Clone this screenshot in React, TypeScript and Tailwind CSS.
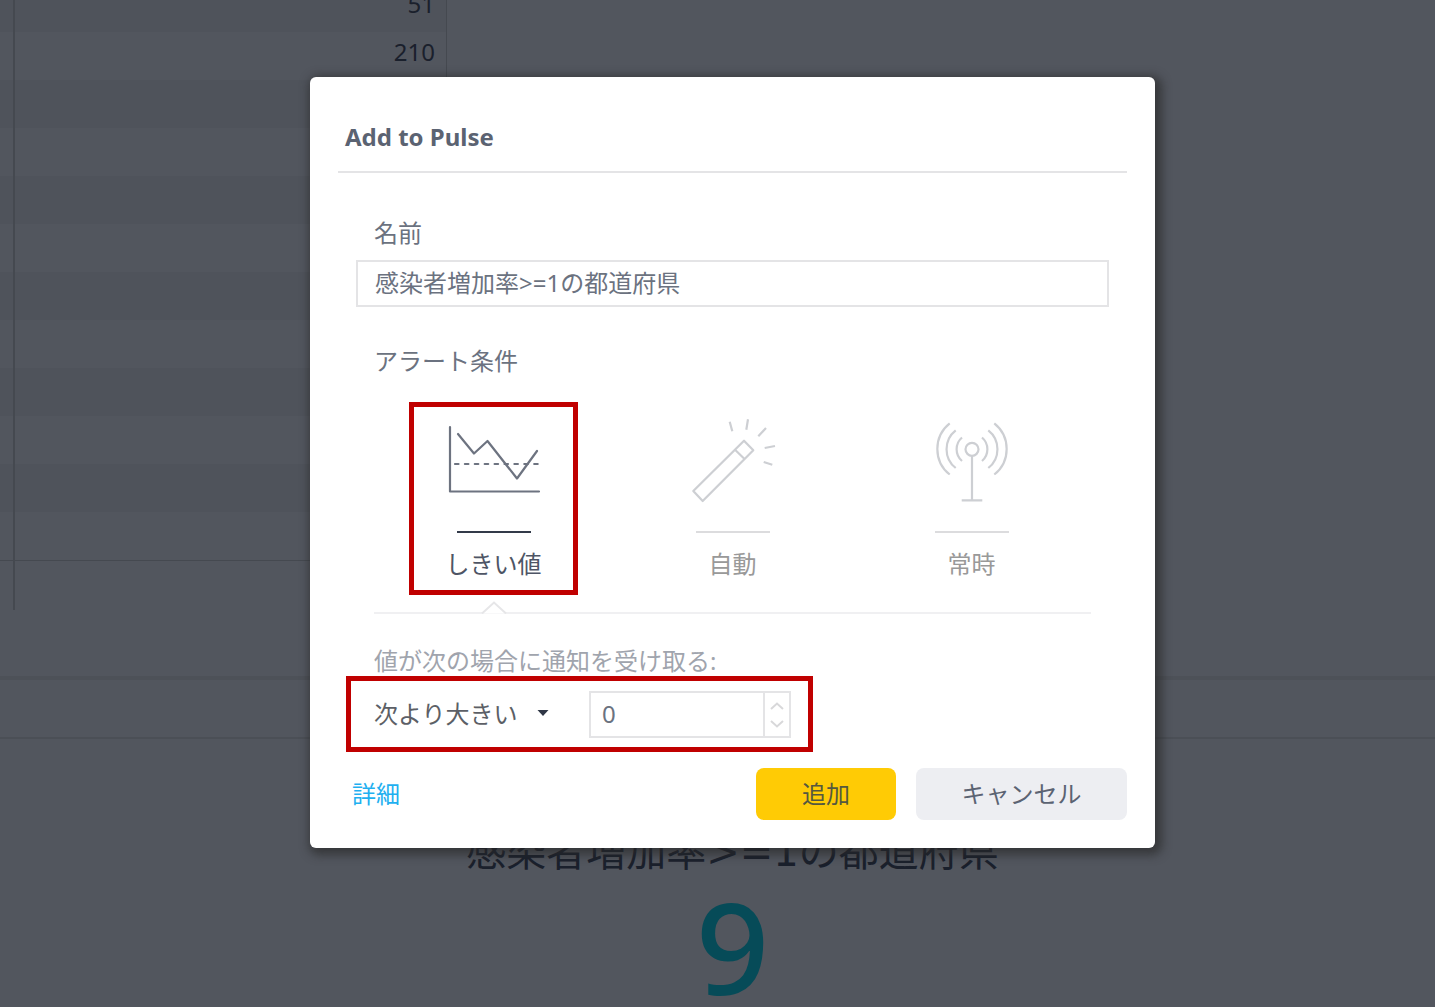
import { useState } from "react";
import clsx from "clsx";

const rows = ["51", "210", "", "", "", "", "", "", "", "", "", ""];

const ThresholdIcon = () => (
  <svg width="96" height="84" viewBox="0 0 96 84" fill="none" stroke="currentColor" strokeWidth="2.2" strokeLinecap="round" strokeLinejoin="round">
    <path d="M4 9V73.5H93" />
    <path d="M12 16L28 35.5L41.5 23L71 60.5L91 33" />
    <path d="M9 46H94.5" strokeDasharray="3.5 6.4" />
  </svg>
);

const WandIcon = () => (
  <svg width="96" height="84" viewBox="0 0 96 84" fill="none" stroke="currentColor" strokeWidth="2.2" strokeLinejoin="round" className="overflow-visible">
    <path d="M8.3 73L17.7 83L68.3 32.3L59 22.7Z" />
    <path d="M50 31.7L59.3 40.7" />
    <path d="M44.7 3.7L47.3 13.3M63 1.3L61.3 11.7M81 10L73.3 18.3M90 28L79.7 30M78.7 44L87.3 46.7" />
  </svg>
);

const AntennaIcon = () => (
  <svg width="96" height="84" viewBox="0 0 96 84" fill="none" stroke="currentColor" strokeWidth="2.2">
    <circle cx="48" cy="31.3" r="6.5" />
    <path d="M48 38V82.3M37.7 82.3H58.3" />
    <path d="M38 19.5A15.5 15.5 0 0 0 38 43M31.7 12.3A24 24 0 0 0 31.7 50M25.7 5.3A32.7 32.7 0 0 0 25.7 56.5" />
    <path d="M58 19.5A15.5 15.5 0 0 1 58 43M64.3 12.3A24 24 0 0 1 64.3 50M70.3 5.3A32.7 32.7 0 0 1 70.3 56.5" />
  </svg>
);

const conditions = [
  { id: "threshold", label: "しきい値", Icon: ThresholdIcon },
  { id: "auto", label: "自動", Icon: WandIcon },
  { id: "always", label: "常時", Icon: AntennaIcon },
];

function Dashboard() {
  return (
    <main className="min-h-screen bg-[#52565e] text-[#1a202c]">
      <table className="w-[447px] border-collapse text-right text-2xl">
        <tbody>
          {rows.map((value, index) => (
            <tr key={index} className={index % 2 ? "bg-[#52565e]" : "bg-[#4f535b]"}>
              <td className={clsx("w-[14px] border-r-2 border-[#454950] p-0", index === 0 ? "h-8" : "h-12")}></td>
              <td className="border-r border-[#454950] p-0 pr-[11px]">
                <div className={clsx("flex items-end justify-end pb-2 leading-[40px]", index === 0 ? "h-8" : "h-12")}>{value}</div>
              </td>
            </tr>
          ))}
          <tr className="border-t border-[#454950]">
            <td className="h-[49px] border-r-2 border-[#454950] p-0"></td>
            <td className="p-0"></td>
          </tr>
        </tbody>
      </table>

      <section className="mt-[66px] border-t-4 border-[#4d5158]">
        <div className="h-[59px] border-b-2 border-[#4b4f56]"></div>
        <div className="flex flex-col items-center pt-[83px] pl-[30px]">
          <h2 className="font-['DejaVu_Sans','Noto_Sans_CJK_JP',sans-serif] text-[40px] leading-[60px]">感染者増加率&gt;=1の都道府県</h2>
          <p className="text-[128px] leading-[128px] font-medium text-[#064b58]">9</p>
        </div>
      </section>
    </main>
  );
}

export default function App() {
  const [selected, setSelected] = useState("threshold");
  const [name, setName] = useState("感染者増加率>=1の都道府県");
  const [value, setValue] = useState(0);

  return (
    <div className="relative h-screen overflow-hidden font-['Noto_Sans','Noto_Sans_CJK_JP',sans-serif]">
      <Dashboard />

      <div className="absolute inset-0 flex items-start justify-center pt-[77px] pl-[30px]">
        <div role="dialog" aria-labelledby="dialog-title" className="w-full max-w-[845px] rounded-md bg-white px-7 pt-11 pb-7 text-2xl leading-8 text-[#6b7280] shadow-[3px_3px_10px_4px_rgba(40,40,40,0.65)]">
          <header className="border-b-2 border-[#e4e4e6] px-[7px] pb-[18px]">
            <h1 id="dialog-title" className="font-bold text-[#5b6372]">Add to Pulse</h1>
          </header>

          <div className="mt-11 px-[18px]">
            <label htmlFor="pulse-name" className="block px-[18px]">名前</label>
            <input
              id="pulse-name"
              value={name}
              onChange={(e) => setName(e.target.value)}
              className="mt-[11px] block h-[47px] w-full border-2 border-[#e4e4e6] px-[17px] pb-1 outline-none"
            />
          </div>

          <div className="mt-[38px] px-9">
            <h2>アラート条件</h2>
            <div className="relative mt-[41px] grid grid-cols-3 border-b-2 border-[#f0f0f2] pb-8">
              {conditions.map(({ id, label, Icon }) => (
                <button
                  key={id}
                  type="button"
                  aria-pressed={selected === id}
                  onClick={() => setSelected(id)}
                  className={clsx("relative flex flex-col items-center", selected === id ? "text-[#4e5565]" : "text-[#999]")}
                >
                  <span className={selected === id ? "text-[#6d7380]" : "text-[#cdcfd3]"}>
                    <Icon />
                  </span>
                  <span className={clsx("mt-[29px] mb-[15px] h-0.5 w-[74px]", selected === id ? "bg-[#323a49]" : "bg-[#dcdcde]")}></span>
                  {label}
                  {selected === id && (
                    <svg width="26" height="13" viewBox="0 0 26 13" fill="#fff" stroke="#e6e6e8" strokeWidth="2" className="absolute top-full mt-[21px]">
                      <path d="M1 12.5L13 1.5L25 12.5" />
                    </svg>
                  )}
                </button>
              ))}
              {/* highlight frame */}
              <div className="pointer-events-none absolute -top-4 left-[35px] h-[193px] w-[169px] border-[5px] border-[#c00000]"></div>
            </div>

            <p className="mt-[31px] text-[#a0a4ad]">値が次の場合に通知を受け取る:</p>

            <div className="relative mt-[14px] flex items-center">
              <div className="relative w-[215px]">
                <select aria-label="条件" className="block w-[180px] appearance-none bg-transparent pb-0.5 text-[#5c5f66] outline-none">
                  <option>次より大きい</option>
                  <option>次より小さい</option>
                </select>
                <svg width="12" height="8" viewBox="0 0 12 8" fill="#2f3746" className="pointer-events-none absolute top-[11px] left-[163px]">
                  <path d="M0.5 1H11.5L6 7Z" />
                </svg>
              </div>
              <div className="flex h-[47px] w-[202px] border-2 border-[#e4e4e6]">
                <input
                  aria-label="値"
                  inputMode="numeric"
                  value={value}
                  onChange={(e) => setValue(Number(e.target.value) || 0)}
                  className="w-0 flex-1 px-[11px] pb-0.5 outline-none"
                />
                <div className="flex w-[26px] flex-col items-center justify-center gap-2 border-l-2 border-[#e4e4e6] text-[#d8d8da]">
                  <button type="button" aria-label="増やす" onClick={() => setValue(value + 1)}>
                    <svg width="14" height="10" viewBox="0 0 14 10" fill="none" stroke="currentColor" strokeWidth="2" className="block">
                      <path d="M1 8L7 2.5L13 8" />
                    </svg>
                  </button>
                  <button type="button" aria-label="減らす" onClick={() => setValue(value - 1)}>
                    <svg width="14" height="10" viewBox="0 0 14 10" fill="none" stroke="currentColor" strokeWidth="2" className="block">
                      <path d="M1 2L7 7.5L13 2" />
                    </svg>
                  </button>
                </div>
              </div>
              {/* highlight frame */}
              <div className="pointer-events-none absolute -top-[15px] -left-7 h-[76px] w-[467px] border-[5px] border-[#c00000]"></div>
            </div>
          </div>

          <footer className="mt-[30px] flex items-center gap-5">
            <a href="#details" className="mr-auto pl-[14px] text-[#1fb0f0]">詳細</a>
            <button type="button" className="h-[52px] w-[140px] rounded-lg bg-[#ffcb05] text-[#55583f]">追加</button>
            <button type="button" className="h-[52px] w-[211px] rounded-lg bg-[#edeef2] text-[#5b6372]">キャンセル</button>
          </footer>
        </div>
      </div>
    </div>
  );
}
